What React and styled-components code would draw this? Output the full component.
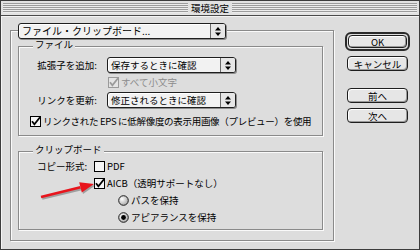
import React from "react";
import styled, { createGlobalStyle } from "styled-components";

const GlobalStyle = createGlobalStyle`
  html, body {
    margin: 0;
    padding: 0;
    background: #dddddd;
  }
  body {
    font-family: "Noto Sans CJK JP", "Liberation Sans", sans-serif;
    font-size: 9.5px;
    color: #000;
  }
`;

const Window = styled.div`
  width: 420px;
  height: 250px;
  box-sizing: border-box;
  background: #dddddd;
  border: 1px solid #3c3c3c;
  display: flex;
  flex-direction: column;
  overflow: hidden;
`;

const TitleBar = styled.div`
  height: 14px;
  border-bottom: 1px solid #4a4a4a;
  display: flex;
  align-items: center;
  gap: 3px;
  padding: 0 2px;
  background: #e2e2e2;
`;

const Stripes = styled.div`
  flex: 1;
  height: 10px;
  background: repeating-linear-gradient(
    to bottom,
    #9c9c9c 0 1px,
    #ececec 1px 2px
  );
`;

const Title = styled.div`
  font-size: 9.5px;
  line-height: 14px;
`;

const Body = styled.div`
  flex: 1;
  display: flex;
  padding: 7px 0 0 9px;
  box-shadow: inset 1px 1px 0 #f4f4f4;
`;

const LeftColumn = styled.div`
  width: 324px;
  display: flex;
  flex-direction: column;
`;

const Popup = styled.div`
  position: relative;
  z-index: 1;
  box-sizing: border-box;
  width: ${(p) => p.$w}px;
  height: 16px;
  margin-left: ${(p) => p.$ml || 0}px;
  margin-bottom: ${(p) => p.$mb || 0}px;
  display: flex;
  border: 1px solid #1e1e1e;
  border-radius: 3px;
  background: #f2f2f2;
  box-shadow: 1px 1px 0 #8c8c8c, inset 1px 1px 0 #ffffff;
`;

const PopupText = styled.div`
  flex: 1;
  padding-left: 3px;
  line-height: 14px;
  font-size: ${(p) => p.$fs || 9.5}px;
  white-space: nowrap;
  overflow: hidden;
`;

const PopupArrow = styled.div`
  width: 14px;
  border-left: 1px solid #6a6a6a;
  display: flex;
  align-items: center;
  justify-content: center;
  background: #e6e6e6;
  border-radius: 0 2px 2px 0;
`;

const Frame = styled.div`
  box-sizing: border-box;
  height: 211px;
  border: 1px solid #8a8a8a;
  box-shadow: inset 1px 1px 0 #fafafa, 1px 1px 0 #fafafa;
  padding: 15px 10px 0 7px;
`;

const Group = styled.div`
  position: relative;
  box-sizing: border-box;
  height: ${(p) => p.$h}px;
  margin-top: ${(p) => p.$mt || 0}px;
  border: 1px solid #8a8a8a;
  box-shadow: inset 1px 1px 0 #fafafa, 1px 1px 0 #fafafa;
  display: flex;
  flex-direction: column;
  align-items: flex-start;
`;

const GroupLabel = styled.div`
  margin: -8px 0 0 14px;
  padding: 0 2px;
  height: 11px;
  line-height: 11px;
  background: #dddddd;
`;

const Row = styled.div`
  display: flex;
  align-items: center;
  height: ${(p) => p.$h || 14}px;
  margin-top: ${(p) => p.$mt || 0}px;
  padding-left: ${(p) => p.$pl || 0}px;
  white-space: nowrap;
`;

const FieldLabel = styled.div`
  width: ${(p) => p.$w}px;
  text-align: ${(p) => p.$align || "right"};
  margin-right: ${(p) => p.$mr || 0}px;
  line-height: 14px;
`;

const Option = styled.div`
  display: flex;
  align-items: center;
  gap: 2px;
  color: ${(p) => (p.$disabled ? "#8c8c8c" : "#000")};
  letter-spacing: ${(p) => (p.$tight ? "-0.3px" : "normal")};
  line-height: 14px;
`;

const ButtonColumn = styled.div`
  margin-left: 11px;
  width: 65px;
  display: flex;
  flex-direction: column;
  align-items: center;
`;

const DefaultRing = styled.div`
  margin-top: 9px;
  width: 65px;
  height: 19px;
  box-sizing: border-box;
  border: 2px solid #2a2a2a;
  border-radius: 6px;
  padding: 1px;
  display: flex;
`;

const Button = styled.div`
  box-sizing: border-box;
  width: ${(p) => (p.$fill ? "100%" : "61px")};
  height: ${(p) => (p.$fill ? "100%" : "15px")};
  margin-top: ${(p) => p.$mt || 0}px;
  border: 1px solid #1e1e1e;
  border-radius: 4px;
  background: #e6e6e6;
  box-shadow: inset 1px 1px 0 #ffffff, inset -1px -1px 0 #9a9a9a;
  display: flex;
  align-items: center;
  justify-content: center;
  font-size: 9.5px;
  line-height: 12px;
`;

const ArrowOverlay = styled.svg`
  position: absolute;
  left: 0;
  top: 0;
  overflow: visible;
  pointer-events: none;
`;

function UpDown() {
  return (
    <svg width="6" height="9" viewBox="0 0 6 9">
      <polygon points="3,0 6,3.5 0,3.5" fill="#000" />
      <polygon points="0,5.5 6,5.5 3,9" fill="#000" />
    </svg>
  );
}

function Checkbox({ checked, disabled }) {
  const c = disabled ? "#9a9a9a" : "#000";
  return (
    <svg width="11" height="11" viewBox="0 0 11 11">
      <rect x="0.5" y="0.5" width="10" height="10" fill={disabled ? "#e4e4e4" : "#f6f6f6"} stroke={c} />
      {checked && (
        <path d="M2 5.2 L4.4 8.2 L10 1.2" fill="none" stroke={c} strokeWidth="1.8" />
      )}
    </svg>
  );
}

function Radio({ checked }) {
  return (
    <svg width="11" height="11" viewBox="0 0 11 11">
      <defs>
        <radialGradient id="rg" cx="0.35" cy="0.35" r="0.7">
          <stop offset="0" stopColor="#ffffff" />
          <stop offset="1" stopColor="#a8a8a8" />
        </radialGradient>
      </defs>
      <circle cx="5.5" cy="5.5" r="4.8" fill="url(#rg)" stroke="#1e1e1e" />
      {checked && <circle cx="5.5" cy="5.5" r="2.4" fill="#000" />}
    </svg>
  );
}

function PopupMenu({ w, ml, mb, fs, children }) {
  return (
    <Popup $w={w} $ml={ml} $mb={mb}>
      <PopupText $fs={fs}>{children}</PopupText>
      <PopupArrow>
        <UpDown />
      </PopupArrow>
    </Popup>
  );
}

function RedArrow() {
  const shaft = "M22 45 L61.5 35.3";
  const head = "75,32 62.8,40.4 60.2,30.3";
  return (
    <ArrowOverlay width="305" height="79">
      <g transform="translate(1.2 1.6)" opacity="0.45">
        <path d={shaft} stroke="#555" strokeWidth="2.6" />
        <polygon points={head} fill="#555" />
      </g>
      <path d={shaft} stroke="#e8141c" strokeWidth="2.6" />
      <polygon points={head} fill="#e8141c" />
    </ArrowOverlay>
  );
}

export default function App() {
  return (
    <>
      <GlobalStyle />
      <Window>
        <TitleBar>
          <Stripes />
          <Title>環境設定</Title>
          <Stripes />
        </TitleBar>
        <Body>
          <LeftColumn>
            <PopupMenu w={208} ml={8} mb={-9} fs={10}>
              ファイル・クリップボード...
            </PopupMenu>
            <Frame>
              <Group $h={90}>
                <GroupLabel>ファイル</GroupLabel>
                <Row $h={16} $mt={7}>
                  <FieldLabel $w={78} $mr={10}>拡張子を追加:</FieldLabel>
                  <PopupMenu w={129}>保存するときに確認</PopupMenu>
                </Row>
                <Row $mt={2} $pl={89}>
                  <Option $disabled>
                    <Checkbox checked disabled />
                    すべて小文字
                  </Option>
                </Row>
                <Row $h={16} $mt={3}>
                  <FieldLabel $w={78} $mr={10}>リンクを更新:</FieldLabel>
                  <PopupMenu w={129}>修正されるときに確認</PopupMenu>
                </Row>
                <Row $mt={6} $pl={11}>
                  <Option $tight>
                    <Checkbox checked />
                    リンクされた EPS に低解像度の表示用画像（プレビュー）を使用
                  </Option>
                </Row>
              </Group>
              <Group $h={79} $mt={15}>
                <GroupLabel>クリップボード</GroupLabel>
                <Row $mt={4} $pl={18}>
                  <FieldLabel $w={57} $align="left">コピー形式:</FieldLabel>
                  <Option>
                    <Checkbox />
                    PDF
                  </Option>
                </Row>
                <Row $mt={3} $pl={75}>
                  <Option>
                    <Checkbox checked />
                    AICB（透明サポートなし）
                  </Option>
                </Row>
                <Row $mt={3} $pl={99}>
                  <Option>
                    <Radio />
                    パスを保持
                  </Option>
                </Row>
                <Row $mt={3} $pl={99}>
                  <Option>
                    <Radio checked />
                    アピアランスを保持
                  </Option>
                </Row>
                <RedArrow />
              </Group>
            </Frame>
          </LeftColumn>
          <ButtonColumn>
            <DefaultRing>
              <Button $fill>OK</Button>
            </DefaultRing>
            <Button $mt={5}>キャンセル</Button>
            <Button $mt={17}>前へ</Button>
            <Button $mt={5}>次へ</Button>
          </ButtonColumn>
        </Body>
      </Window>
    </>
  );
}
